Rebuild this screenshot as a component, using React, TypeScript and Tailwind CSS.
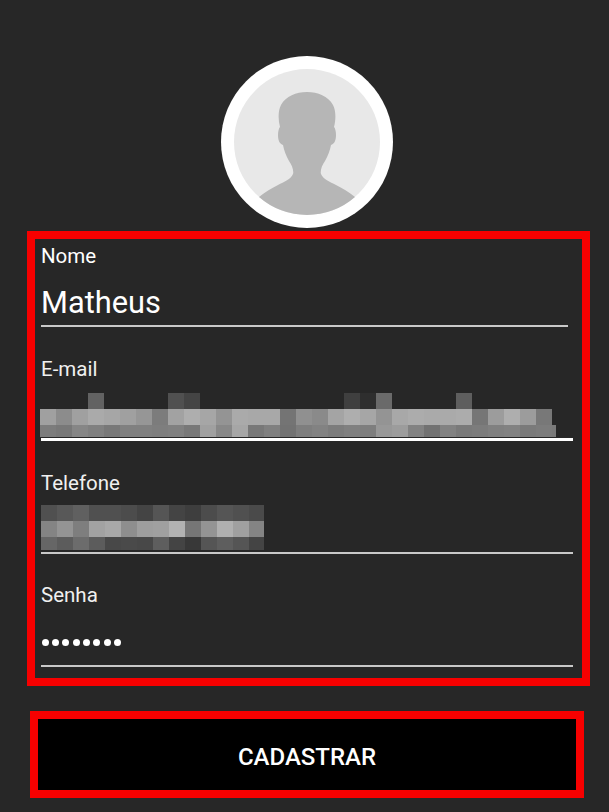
const fieldLine = "h-[2px] bg-[#c9c9c9]";
const labelText = "text-[20.5px] leading-[26px] text-[#f0f0f0]";

const emailRows = [
  { h: "h-[16px]", cells: ["", "", "", "#626262", "", "", "", "", "#505050", "#444444", "", "", "", "", "", "", "", "", "", "#3f3f3f", "#2e2e2e", "#6a6a6a", "", "", "", "", "#5e5e5e"] },
  { h: "h-[16px]", cells: ["#a0a0a0", "#8c8c8c", "#a0a0a0", "#aaaaaa", "#a6a6a6", "#a0a0a0", "#969696", "#7c7c7c", "#a2a2a2", "#aeaeae", "#a6a6a6", "#949494", "#aaaaaa", "#a8a8a8", "#a8a8a8", "#747474", "#909090", "#8a8a8a", "#a4a4a4", "#aeaeae", "#a6a6a6", "#949494", "#a8a8a8", "#acacac", "#aaaaaa", "#aaaaaa", "#acacac", "#767676", "#9c9c9c", "#aeaeae", "#9c9c9c", "#787878"] },
  { h: "h-[12px]", cells: ["#7c7c7c", "#787878", "#868686", "#808080", "#787878", "#808080", "#808080", "#7e7e7e", "#808080", "#787878", "#a0a0a0", "#888888", "#a6a6a6", "#787878", "#808080", "#727272", "#7e7e7e", "#828282", "#7c7c7c", "#808080", "#7e7e7e", "#989898", "#9c9c9c", "#828282", "#727272", "#828282", "#7a7a7a", "#7c7c7c", "#808080", "#828282", "#7a7a7a", "#7c7c7c", "#7a7a7a"] },
];

const phoneRows = [
  { h: "h-[16px]", cells: ["#505050", "#585858", "#606060", "#505050", "#505050", "#4c4c4c", "#444444", "#555555", "#444444", "#3e3e3e", "#4c4c4c", "#555555", "#505050", "#4a4a4a"] },
  { h: "h-[16px]", cells: ["#848484", "#949494", "#7e7e7e", "#a2a2a2", "#a8a8a8", "#8e8e8e", "#9e9e9e", "#a0a0a0", "#b2b2b2", "#767676", "#949494", "#b0b0b0", "#a0a0a0", "#848484"] },
  { h: "h-[13px]", cells: ["#666666", "#5c5c5c", "#6c6c6c", "#5c5c5c", "#484848", "#4a4a4a", "#484848", "#5e5e5e", "#444444", "#383838", "#555555", "#5e5e5e", "#555555", "#444444"] },
];

// blurred value, same mosaic cells as the picture
function Mosaic({ rows, className }: { rows: { h: string; cells: string[] }[]; className: string }) {
  return (
    <div className={`overflow-hidden ${className}`}>
      {rows.map((row, i) => (
        <div key={i} className={`flex ${row.h}`}>
          {row.cells.map((c, j) => (
            <div key={j} className="w-[16px] shrink-0" style={{ backgroundColor: c || "transparent" }} />
          ))}
        </div>
      ))}
    </div>
  );
}

function Avatar() {
  return (
    <div className="h-[172px] w-[172px] rounded-full bg-white p-[13px]">
      <svg viewBox="0 0 146 146" className="h-full w-full">
        <circle cx="73" cy="73" r="73" fill="#e8e8e8" />
        <path
          d="M25 128 C31 123 38 119 44 116 C50 113 57 110 59 105 C60 102 58 96 55 92 C52 87 50 81 49 76 C46 75 44 72 44 66 C44 62 45 59 46 58 C44 50 44 42 47 36 C52 27 62 23 73 23 C84 23 94 27 99 36 C102 42 102 50 100 58 C101 59 102 62 102 66 C102 72 100 75 97 76 C96 81 94 87 91 92 C88 96 86 102 87 105 C89 110 96 113 102 116 C108 119 115 123 121 128 A73 73 0 0 1 25 128 Z"
          fill="#b6b6b6"
        />
      </svg>
    </div>
  );
}

export default function App() {
  return (
    <div className="flex h-[812px] w-[609px] flex-col overflow-hidden bg-[#272727] font-['Roboto',sans-serif] text-white">
      <div className="flex justify-center pt-[56px] pl-[5px]">
        <Avatar />
      </div>

      <div className="ml-[27px] mt-[3px] h-[455px] w-[563px] border-[8px] border-[#f70000] pl-[6px]">
        <div className="w-[527px]">
          <div className="pt-[4px] text-[20.5px] leading-[26px]">Nome</div>
          <div className="mt-[16px] text-[30.8px] leading-[36px]">Matheus</div>
          <div className={`mt-[4px] ${fieldLine}`} />
        </div>

        <div className="mt-[29px] w-[532px]">
          <div className={labelText}>E-mail</div>
          <div className="-ml-[1px] mt-[11px]">
            <Mosaic rows={emailRows} className="w-[516px]" />
          </div>
          <div className="mt-[1px] h-[3px] bg-white" />
        </div>

        <div className="mt-[29px] w-[532px]">
          <div className={labelText}>Telefone</div>
          <div className="mt-[9px]">
            <Mosaic rows={phoneRows} className="w-[223px]" />
          </div>
          <div className={`mt-[2px] ${fieldLine}`} />
        </div>

        <div className="mt-[28px] w-[532px]">
          <div className={labelText}>Senha</div>
          <div className="mt-[16px] flex h-[36px] items-center gap-[3.4px] pl-[0.5px]">
            {[0, 1, 2, 3, 4, 5, 6, 7].map((i) => (
              <span key={i} className="h-[7px] w-[7px] rounded-full bg-white" />
            ))}
          </div>
          <div className={`mt-[5px] ${fieldLine}`} />
        </div>
      </div>

      <button className="ml-[30px] mt-[25px] h-[87px] w-[554px] border-[8px] border-[#f70000] bg-black pt-[5px] text-[24px] font-medium text-white">
        CADASTRAR
      </button>
    </div>
  );
}
